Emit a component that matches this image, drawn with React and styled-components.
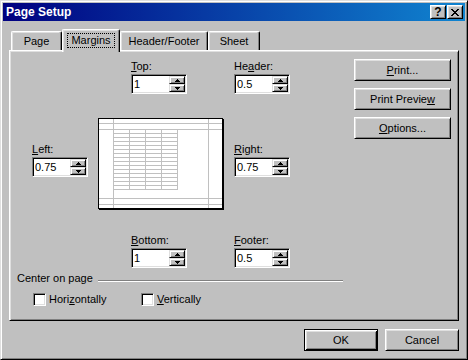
import React from "react";
import styled, { createGlobalStyle } from "styled-components";

const GlobalStyle = createGlobalStyle`
  html, body {
    margin: 0;
    padding: 0;
    background: #c0c0c0;
  }
  body {
    font-family: "Liberation Sans", Arial, sans-serif;
    font-size: 11px;
    line-height: 13px;
    color: #000;
  }
`;

const raisedBevel = `
  border: 1px solid;
  border-color: #fff #000 #000 #fff;
  box-shadow: inset 1px 1px #dfdfdf, inset -1px -1px #808080;
`;

const sunkenBevel = `
  border: 1px solid;
  border-color: #808080 #fff #fff #808080;
  box-shadow: inset 1px 1px #000, inset -1px -1px #dfdfdf;
`;

const Window = styled.div`
  width: 468px;
  height: 360px;
  box-sizing: border-box;
  background: #c0c0c0;
  border: 1px solid;
  border-color: #dfdfdf #000 #000 #dfdfdf;
  box-shadow: inset 1px 1px #fff, inset -1px -1px #808080;
  padding: 2px;
  display: flex;
  flex-direction: column;
`;

const TitleBar = styled.div`
  height: 18px;
  display: flex;
  align-items: center;
  padding: 0 2px 0 3px;
  background: linear-gradient(to right, #000080, #1084d0);
  color: #fff;
  font-weight: bold;
  font-size: 12px;
`;

const TitleText = styled.span`
  flex: 1;
`;

const TitleButtons = styled.div`
  display: flex;
  gap: 1px;
`;

const CaptionButton = styled.div`
  width: 16px;
  height: 14px;
  box-sizing: border-box;
  background: #c0c0c0;
  border: 1px solid;
  border-color: #fff #000 #000 #fff;
  box-shadow: inset 1px 1px #dfdfdf, inset -1px -1px #808080;
  display: flex;
  align-items: center;
  justify-content: center;
  color: #000;
  font-size: 12px;
  font-weight: bold;
  line-height: 12px;
`;

const Body = styled.div`
  flex: 1;
  padding: 8px 6px 0;
  display: flex;
  flex-direction: column;
`;

const TabRow = styled.div`
  display: flex;
  align-items: flex-end;
  height: 23px;
  margin-bottom: -2px;
  padding-left: 2px;
  position: relative;
  z-index: 1;
`;

const Tab = styled.div`
  width: ${(p) => p.$w}px;
  height: ${(p) => (p.$active ? 23 : 19)}px;
  margin-bottom: ${(p) => (p.$active ? 0 : 2)}px;
  box-sizing: border-box;
  background: #c0c0c0;
  border-top: 1px solid #fff;
  border-left: 1px solid #fff;
  border-right: 1px solid #000;
  border-radius: 2px 2px 0 0;
  box-shadow: inset -1px 0 #808080, inset 1px 1px #dfdfdf;
  padding-top: ${(p) => (p.$active ? 3 : 3)}px;
  text-align: center;
`;

const FocusRect = styled.span`
  display: inline-block;
  border: 1px dotted #000;
  padding: 0 3px;
  line-height: 13px;
`;

const Panel = styled.div`
  height: 271px;
  box-sizing: border-box;
  border: 1px solid;
  border-color: #fff #000 #000 #fff;
  box-shadow: inset 1px 1px #dfdfdf, inset -1px -1px #808080;
  padding: 1px;
  display: flex;
`;

const LeftArea = styled.div`
  width: 332px;
  display: flex;
  flex-direction: column;
`;

const Diagram = styled.div`
  display: grid;
  grid-template-columns: 56px 10px 125px 11px 56px;
  align-items: start;
  margin: 8px 0 0 21px;
`;

const FieldGroup = styled.div`
  grid-column: ${(p) => p.$col};
  grid-row: ${(p) => p.$row};
  margin-top: ${(p) => p.$top || 0}px;
  margin-left: ${(p) => p.$left || 0}px;
  display: flex;
  flex-direction: column;
`;

const Label = styled.label`
  line-height: 13px;
  margin-bottom: 1px;
`;

const Key = styled.span`
  text-decoration: underline;
  text-underline-offset: 1px;
`;

const SpinBox = styled.div`
  width: 56px;
  height: 20px;
  box-sizing: border-box;
  ${sunkenBevel}
  background: #fff;
  padding: 1px;
  display: flex;
`;

const SpinValue = styled.span`
  flex: 1;
  padding-left: 1px;
  line-height: 16px;
`;

const SpinButtons = styled.div`
  width: 16px;
  display: flex;
  flex-direction: column;
`;

const SpinButton = styled.div`
  height: 8px;
  box-sizing: border-box;
  background: #c0c0c0;
  border: 1px solid;
  border-color: #dfdfdf #000 #000 #dfdfdf;
  box-shadow: inset 1px 1px #fff, inset -1px -1px #808080;
  display: flex;
  align-items: center;
  justify-content: center;
`;

const PagePreview = styled.div`
  grid-column: 3;
  grid-row: 2;
  margin-top: 24px;
  width: 125px;
  height: 91px;
  box-sizing: border-box;
  border: 1px solid #000;
  background: #fff;
  box-shadow: 1px 1px 0 #000;
  display: flex;
`;

const SectionHeading = styled.div`
  display: flex;
  align-items: flex-start;
  margin: 4px 0 0 6px;
`;

const Rule = styled.div`
  flex: 1;
  margin: 8px 0 0 5px;
  border-top: 1px solid #808080;
  border-bottom: 1px solid #fff;
`;

const CheckRow = styled.div`
  display: flex;
  margin: 8px 0 0 22px;
`;

const CheckItem = styled.div`
  width: 108px;
  display: flex;
  align-items: center;
  gap: 3px;
`;

const CheckBox = styled.div`
  width: 13px;
  height: 13px;
  box-sizing: border-box;
  ${sunkenBevel}
  background: #fff;
`;

const ButtonColumn = styled.div`
  margin: 7px 0 0 11px;
  display: flex;
  flex-direction: column;
  gap: 7px;
`;

const Button = styled.div`
  width: ${(p) => p.$w || 97}px;
  height: 22px;
  box-sizing: border-box;
  background: #c0c0c0;
  ${(p) =>
    p.$default
      ? `border: 1px solid #000;
         box-shadow: inset 1px 1px #fff, inset -1px -1px #000, inset 2px 2px #dfdfdf, inset -2px -2px #808080;`
      : raisedBevel}
  display: flex;
  align-items: center;
  justify-content: center;
  line-height: 13px;
`;

const FooterRow = styled.div`
  display: flex;
  justify-content: flex-end;
  gap: 7px;
  margin-top: 8px;
`;

const Arrow = ({ down }) => (
  <svg width="5" height="3" viewBox="0 0 5 3" shapeRendering="crispEdges">
    {down ? (
      <>
        <rect x="0" y="0" width="5" height="1" fill="#000" />
        <rect x="1" y="1" width="3" height="1" fill="#000" />
        <rect x="2" y="2" width="1" height="1" fill="#000" />
      </>
    ) : (
      <>
        <rect x="2" y="0" width="1" height="1" fill="#000" />
        <rect x="1" y="1" width="3" height="1" fill="#000" />
        <rect x="0" y="2" width="5" height="1" fill="#000" />
      </>
    )}
  </svg>
);

const CloseGlyph = () => {
  const rows = ["XX....XX", ".XX..XX.", "..XXXX..", "...XX...", "..XXXX..", ".XX..XX.", "XX....XX"];
  return (
    <svg width="8" height="7" viewBox="0 0 8 7" shapeRendering="crispEdges">
      {rows.map((r, y) =>
        r.split("").map((c, x) =>
          c === "X" ? <rect key={`${x}-${y}`} x={x} y={y} width="1" height="1" fill="#000" /> : null
        )
      )}
    </svg>
  );
};

const SheetDrawing = () => {
  const grey = "#c0c0c0";
  const lines = [];
  // margin lines
  [14, 109].forEach((x) => lines.push(<rect key={`v${x}`} x={x} y="0" width="1" height="89" fill={grey} />));
  [4, 10, 79, 85].forEach((y) => lines.push(<rect key={`h${y}`} x="0" y={y} width="123" height="1" fill={grey} />));
  // cell grid
  for (let x = 30; x <= 78; x += 16) {
    lines.push(<rect key={`gv${x}`} x={x} y="10" width="1" height="61" fill={grey} />);
  }
  for (let y = 14; y <= 70; y += 4) {
    lines.push(<rect key={`gh${y}`} x="14" y={y} width="65" height="1" fill={grey} />);
  }
  return (
    <svg width="123" height="89" viewBox="0 0 123 89" shapeRendering="crispEdges">
      {lines}
    </svg>
  );
};

const Spinner = ({ label, value, col, row, top, left }) => (
  <FieldGroup $col={col} $row={row} $top={top} $left={left}>
    <Label>{label}</Label>
    <SpinBox>
      <SpinValue>{value}</SpinValue>
      <SpinButtons>
        <SpinButton>
          <Arrow />
        </SpinButton>
        <SpinButton>
          <Arrow down />
        </SpinButton>
      </SpinButtons>
    </SpinBox>
  </FieldGroup>
);

export default function App() {
  return (
    <>
      <GlobalStyle />
      <Window>
        <TitleBar>
          <TitleText>Page Setup</TitleText>
          <TitleButtons>
            <CaptionButton>?</CaptionButton>
            <CaptionButton>
              <CloseGlyph />
            </CaptionButton>
          </TitleButtons>
        </TitleBar>
        <Body>
          <TabRow>
            <Tab $w={51}>Page</Tab>
            <Tab $w={58} $active>
              <FocusRect>Margins</FocusRect>
            </Tab>
            <Tab $w={88}>Header/Footer</Tab>
            <Tab $w={52}>Sheet</Tab>
          </TabRow>
          <Panel>
            <LeftArea>
              <Diagram>
                <Spinner label={<><Key>T</Key>op:</>} value="1" col={3} row={1} left={33} />
                <Spinner label={<>He<Key>a</Key>der:</>} value="0.5" col={5} row={1} />
                <Spinner label={<><Key>L</Key>eft:</>} value="0.75" col={1} row={2} top={49} />
                <PagePreview>
                  <SheetDrawing />
                </PagePreview>
                <Spinner label={<><Key>R</Key>ight:</>} value="0.75" col={5} row={2} top={49} />
                <Spinner label={<><Key>B</Key>ottom:</>} value="1" col={3} row={3} top={25} left={33} />
                <Spinner label={<><Key>F</Key>ooter:</>} value="0.5" col={5} row={3} top={25} />
              </Diagram>
              <SectionHeading>
                <span>Center on page</span>
                <Rule />
              </SectionHeading>
              <CheckRow>
                <CheckItem>
                  <CheckBox />
                  <span>
                    Hori<Key>z</Key>ontally
                  </span>
                </CheckItem>
                <CheckItem>
                  <CheckBox />
                  <span>
                    <Key>V</Key>ertically
                  </span>
                </CheckItem>
              </CheckRow>
            </LeftArea>
            <ButtonColumn>
              <Button>
                <span>
                  <Key>P</Key>rint...
                </span>
              </Button>
              <Button>
                <span>
                  Print Previe<Key>w</Key>
                </span>
              </Button>
              <Button>
                <span>
                  <Key>O</Key>ptions...
                </span>
              </Button>
            </ButtonColumn>
          </Panel>
          <FooterRow>
            <Button $w={74} $default>
              OK
            </Button>
            <Button $w={74}>Cancel</Button>
          </FooterRow>
        </Body>
      </Window>
    </>
  );
}
